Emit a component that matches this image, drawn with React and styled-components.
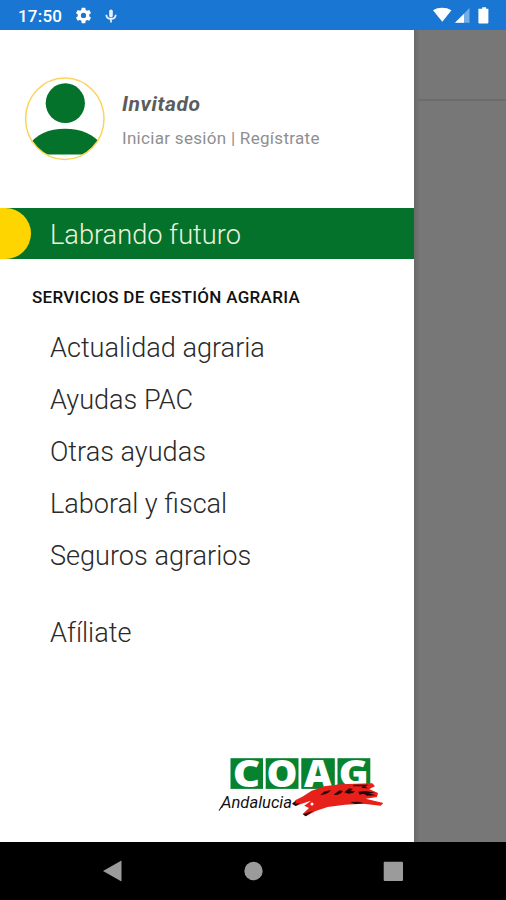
import React from "react";
import styled, { createGlobalStyle } from "styled-components";

const services = [
  "Actualidad agraria",
  "Ayudas PAC",
  "Otras ayudas",
  "Laboral y fiscal",
  "Seguros agrarios",
];

function StatusIcons() {
  return (
    <svg width="60" height="20" viewBox="0 0 60 20">
      <path d="M2 4.300C7 1 15 1 20.500 4.300L11.300 15.800Z" fill="#fff" />
      <path d="M24 16.800L38.500 2V16.800Z" fill="#75aee6" />
      <path d="M24 16.800L33 7.800V16.800Z" fill="#fff" />
      <path d="M51.300 1.200h3.800v1.600h2.300v13.800q0 .8-.8.800h-8.400q-.8 0-.8-.8V2.800h3.900z" fill="#fff" />
    </svg>
  );
}

function Avatar() {
  return (
    <svg width="82" height="84" viewBox="0 0 82 84">
      <defs>
        <clipPath id="face">
          <ellipse cx="40.800" cy="41.800" rx="39" ry="40.400" />
        </clipPath>
      </defs>
      <g clipPath="url(#face)" fill="#04722a">
        <ellipse cx="41.300" cy="26.200" rx="19.600" ry="19.900" />
        <path d="M3 77.500V70C12 57 25 51.700 41 51.700S70 57 80 70V77.500Z" />
      </g>
      <ellipse cx="40.800" cy="41.800" rx="39.200" ry="40.700" fill="none" stroke="#fbd45e" strokeWidth="1.500" />
    </svg>
  );
}

function Logo() {
  return (
    <LogoSvg width="170" height="78" viewBox="0 -12 170 78">
      <g fill="#07832f">
        <rect x="12.500" y="2.200" width="32.500" height="30.700" />
        <rect x="47.700" y="2.200" width="32.800" height="30.700" />
        <rect x="83.300" y="2.200" width="33.500" height="30.700" />
        <rect x="119.500" y="2.200" width="32.800" height="30.700" />
      </g>
      <g className="letters">
        <text x="14.800" y="31" textLength="27.500" lengthAdjust="spacingAndGlyphs">C</text>
        <text x="48.500" y="31" textLength="31" lengthAdjust="spacingAndGlyphs">O</text>
        <text x="86" y="31" textLength="28" lengthAdjust="spacingAndGlyphs">A</text>
        <text x="120.800" y="31" textLength="30" lengthAdjust="spacingAndGlyphs">G</text>
      </g>
      <text className="region" x="3" y="51.500" textLength="71" lengthAdjust="spacingAndGlyphs">Andalucia</text>
      {/* loose end of the initial */}
      <path d="M5 49L1 54.500" stroke="#1c1c1c" strokeWidth="1.200" />
      {/* brush stroke */}
      <g transform="translate(77 -4) scale(.3333)">
        <path
          d="M-8 157L2 144 22 134 50 116 88 103 135 97 232 94 240 103 222 111 249 123 246 135 212 140 265 153 257 161 205 155 150 158 98 165 62 177 32 193 23 186 42 168 28 161 48 146 18 156 2 162Z"
          fill="#e8201a"
        />
        <path
          d="M76 130L86 119 108 114 100 122 90 127ZM116 128L133 115 144 117 138 124 126 129ZM148 121L162 109 174 111 166 118 180 117 174 123 160 125ZM173 103L178 98 220 98 210 104 220 109 200 108 203 103ZM190 119L212 117 240 122 222 124 242 130 216 131 206 125 194 128ZM165 150L190 149 208 154 180 156ZM24 187L42 181 55 176 32 193ZM-9 154L4 148 0 155 16 154 2 162Z"
          fill="#240706"
        />
        <circle cx="51" cy="156" r="4.500" fill="#fff" />
      </g>
    </LogoSvg>
  );
}

function App() {
  return (
    <>
      <GlobalStyle />
      <Screen>
        <StatusBar>
          <Clock>17:50</Clock>
          <svg width="17" height="17" viewBox="0 0 24 24">
            <path
              fill="#fff"
              fillRule="evenodd"
              d="M9.500 1h5l.6 3.200 1.900 1.100 3.100-1.100 2.500 4.300-2.500 2.100v2.300l2.500 2.100-2.500 4.400-3.100-1.100-1.900 1.100-.6 3.600h-5l-.6-3.600L7 18.300l-3.100 1.100L1.400 15l2.500-2.100v-2.300L1.400 8.500l2.500-4.300L7 5.300l1.900-1.100zM12 8.200a3.700 3.700 0 1 0 0 7.400 3.700 3.700 0 0 0 0-7.400z"
            />
          </svg>
          <MicIcon width="12" height="14" viewBox="0 0 12 14">
            <rect x="4.200" y="0.500" width="3.600" height="8" rx="1.800" fill="#e9f3fd" />
            <path d="M1.300 5.800C1.500 11.300 10.500 11.300 10.700 5.800M6 10v3.500" fill="none" stroke="#e9f3fd" strokeWidth="1.700" />
          </MicIcon>
          <Signals>
            <StatusIcons />
          </Signals>
        </StatusBar>

        <Content>
          <Drawer>
            <Profile>
              <Avatar />
              <div>
                <UserName>Invitado</UserName>
                <Session>Iniciar sesión | Regístrate</Session>
              </div>
            </Profile>
            <ActiveItem>
              <Marker />
              <Label>Labrando futuro</Label>
            </ActiveItem>
            <SectionTitle>SERVICIOS DE GESTIÓN AGRARIA</SectionTitle>
            <nav>
              {services.map((item) => (
                <MenuItem key={item}>{item}</MenuItem>
              ))}
              <MenuItem $spaced>Afíliate</MenuItem>
            </nav>
            <Logo />
          </Drawer>
          <Backdrop>
            <DimmedHeader />
          </Backdrop>
        </Content>

        <NavBar>
          <svg width="506" height="58" viewBox="0 0 506 58">
            <g fill="#9b9b9b">
              <path d="M103 29L121.500 18.500V39.500Z" />
              <circle cx="253.500" cy="29" r="9.200" />
              <rect x="383.700" y="19.700" width="19.300" height="19.300" rx="1" />
            </g>
          </svg>
        </NavBar>
      </Screen>
    </>
  );
}

export default App;

const GlobalStyle = createGlobalStyle`
  body {
    margin: 0;
    background: #fff;
    font-family: Roboto, sans-serif;
  }
`;

const Screen = styled.div`
  width: 506px;
  height: 900px;
  display: flex;
  flex-direction: column;
  overflow: hidden;
`;

const StatusBar = styled.header`
  height: 30px;
  box-sizing: border-box;
  padding: 1px 15px 0 18px;
  display: flex;
  align-items: center;
  background: #1976d2;
  color: #fff;
`;

const Clock = styled.span`
  width: 57px;
  font-size: 17px;
  font-weight: 500;
  letter-spacing: 0.2px;
`;

const MicIcon = styled.svg`
  margin-left: 13px;
`;

const Signals = styled.div`
  display: flex;
  margin-left: auto;
`;

const Content = styled.div`
  height: 812px;
  display: flex;
`;

const Drawer = styled.aside`
  width: 414px;
  height: 100%;
  display: flex;
  flex-direction: column;
  background: #fff;
`;

const Profile = styled.div`
  height: 178px;
  box-sizing: border-box;
  padding: 47px 0 0 24px;
  display: flex;
  gap: 16px;
`;

const UserName = styled.div`
  margin-top: 14px;
  font-size: 21px;
  line-height: 26px;
  font-weight: 700;
  font-style: italic;
  letter-spacing: 0.6px;
  color: #5c5c5c;
`;

const Session = styled.div`
  margin-top: 8px;
  font-size: 17px;
  line-height: 26px;
  letter-spacing: 0.3px;
  white-space: nowrap;
  color: #8f8f8f;
`;

const ActiveItem = styled.div`
  height: 51px;
  flex-shrink: 0;
  display: flex;
  align-items: center;
  background: #04722a;
  color: #eef3df;
`;

const Marker = styled.span`
  width: 31px;
  height: 51px;
  margin-right: 19px;
  border-radius: 0 26px 26px 0;
  background: #ffd500;
`;

const Label = styled.span`
  padding-top: 2px;
  font-size: 27.200px;
  font-weight: 300;
  white-space: nowrap;
`;

const SectionTitle = styled.h2`
  margin: 26px 0 13px 32px;
  font-size: 17px;
  line-height: 24px;
  font-weight: 500;
  letter-spacing: 0.3px;
  color: #111;
`;

const MenuItem = styled.div`
  height: 52px;
  margin-top: ${({ $spaced }) => ($spaced ? "25px" : "0")};
  padding-left: 50px;
  font-size: 27.100px;
  line-height: 52px;
  font-weight: 300;
  color: #2a2a2a;
`;

const LogoSvg = styled.svg`
  align-self: flex-end;
  margin: auto 26px 20px 0;

  .letters {
    font-family: "Open Sans", sans-serif;
    font-size: 37px;
    font-weight: 800;
    fill: #fff;
  }

  .region {
    font-size: 16px;
    font-weight: 400;
    font-style: italic;
    fill: #111;
  }
`;

const Backdrop = styled.div`
  flex: 1;
  background: linear-gradient(to right, #686868, #777 6px);
`;

const DimmedHeader = styled.div`
  height: 69px;
  border-bottom: 2px solid #6c6c6c;
`;

const NavBar = styled.footer`
  height: 58px;
  display: flex;
  background: #000;
`;
